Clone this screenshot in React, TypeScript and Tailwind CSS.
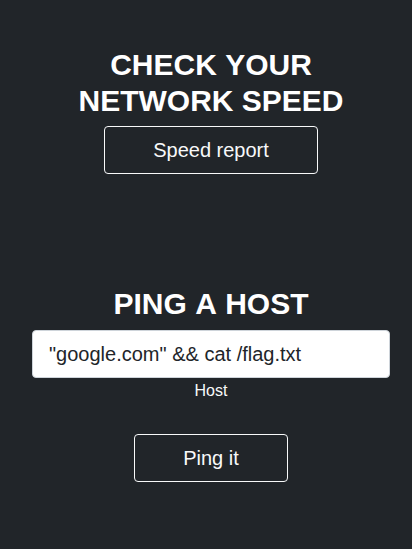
export default function App() {
  return (
    <main className="min-h-screen bg-[#212529] pt-[47px] pr-[22px] pb-16 pl-8 text-center font-['Liberation_Sans',Arial,sans-serif] text-[#f8f9fa]">
      <section className="mb-28">
        <h2 className="mb-[7px] text-[30px] leading-9 font-bold text-white uppercase [font-kerning:none]">Check your network speed</h2>
        <button type="button" className="h-12 rounded border border-[#f8f9fa] px-12 text-xl">
          Speed report
        </button>
      </section>
      <form onSubmit={(event) => event.preventDefault()}>
        <h2 className="mb-2 text-[30px] leading-9 font-bold text-white uppercase [font-kerning:none]">Ping a host</h2>
        <input
          id="host"
          type="text"
          defaultValue={'"google.com" && cat /flag.txt'}
          className="block h-12 w-full rounded border border-[#ced4da] bg-white px-4 text-xl text-[#212529] outline-none"
        />
        <label htmlFor="host" className="mb-[30px] block text-base leading-[26px]">
          Host
        </label>
        <button type="submit" className="h-12 rounded border border-[#f8f9fa] px-12 text-xl">
          Ping it
        </button>
      </form>
    </main>
  );
}
